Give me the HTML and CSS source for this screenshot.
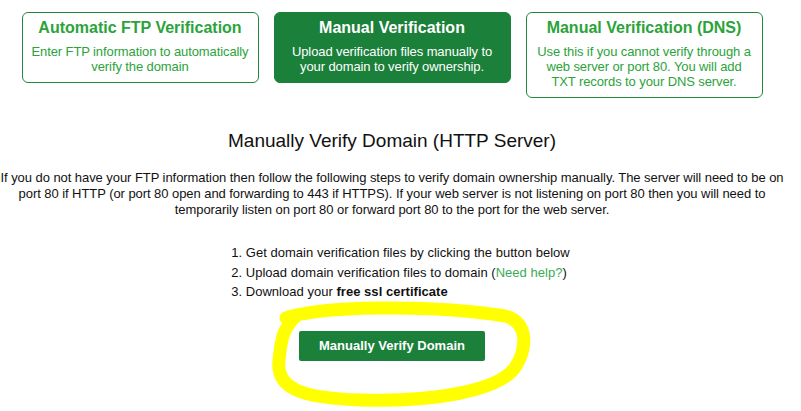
FILE: index.html
```html
<!DOCTYPE html>
<html>
<head>
<meta charset="utf-8">
<link rel="stylesheet" href="styles.css">
</head>
<body>
<div class="content">
  <div class="options">
    <div class="opt">
      <div class="opt-title">Automatic FTP Verification</div>
      <div class="opt-sub">Enter FTP information to automatically verify the domain</div>
    </div>
    <div class="opt active">
      <div class="opt-title">Manual Verification</div>
      <div class="opt-sub">Upload verification files manually to your domain to verify ownership.</div>
    </div>
    <div class="opt">
      <div class="opt-title">Manual Verification (DNS)</div>
      <div class="opt-sub">Use this if you cannot verify through a web server or port 80. You will add TXT records to your DNS server.</div>
    </div>
  </div>
  <h2 class="heading">Manually Verify Domain (HTTP Server)</h2>
  <p class="intro">If you do not have your FTP information then follow the following steps to verify domain ownership manually. The server will need to be on port 80 if HTTP (or port 80 open and forwarding to 443 if HTTPS). If your web server is not listening on port 80 then you will need to temporarily listen on port 80 or forward port 80 to the port for the web server.</p>
  <div class="steps-wrap">
    <ol class="steps">
      <li>Get domain verification files by clicking the button below</li>
      <li>Upload domain verification files to domain (<a class="help" href="#">Need help?</a>)</li>
      <li>Download your <b>free ssl certificate</b></li>
    </ol>
  </div>
  <div class="btn-wrap">
    <button class="btn">Manually Verify Domain</button>
  </div>
</div>
<svg class="scribble" width="801" height="411" viewBox="0 0 801 411">
  <path d="M286 318 C 320 306, 430 304, 505 316 C 530 322, 526 350, 516 366 C 500 392, 430 402, 360 400 C 300 398, 276 388, 279 360 C 281 340, 283 328, 296 316" fill="none" stroke="#ffff00" stroke-width="13" stroke-linecap="round" stroke-linejoin="round"/>
</svg>
</body>
</html>
```
FILE: styles.css
```css
html, body {
  margin: 0;
  padding: 0;
  background: #ffffff;
}
body {
  font-family: "Liberation Sans", Arial, sans-serif;
  color: #111111;
  width: 801px;
  height: 411px;
  overflow: hidden;
  position: relative;
}
.content {
  width: 784px;
}
.options {
  display: flex;
  justify-content: center;
  align-items: flex-start;
  gap: 15px;
  padding-top: 12px;
}
.opt {
  box-sizing: border-box;
  width: 237px;
  border: 1px solid #1e8a3c;
  border-radius: 6px;
  padding: 6px 8px 8px;
  text-align: center;
  color: #2ba33a;
  background: #fff;
}
.opt.active {
  background: #1b803a;
  border-color: #1b803a;
  color: #ffffff;
}
.opt-title {
  font-size: 16px;
  font-weight: bold;
  line-height: 18px;
  margin-bottom: 7px;
}
.opt-sub {
  font-size: 13px;
  line-height: 15px;
  letter-spacing: -0.1px;
}
.heading {
  font-size: 19px;
  font-weight: normal;
  text-align: center;
  margin: 31px 0 0;
  line-height: 24px;
  color: #111;
}
.intro {
  font-size: 13px;
  line-height: 16px;
  letter-spacing: -0.06px;
  text-align: center;
  margin: 17px 0 0;
}
.steps-wrap {
  text-align: center;
  margin-top: 25px;
}
.steps {
  display: inline-block;
  text-align: left;
  margin: 0 0 0 17px;
  padding: 0;
  list-style-position: inside;
  font-size: 13px;
  line-height: 19.5px;
  letter-spacing: 0.03px;
}
.help {
  color: #3aaa55;
  text-decoration: none;
}
.btn-wrap {
  display: flex;
  justify-content: center;
  margin-top: 29px;
}
.btn {
  width: 186px;
  height: 30px;
  border: none;
  border-radius: 2px;
  background: #1b803a;
  color: #fff;
  font-family: "Liberation Sans", Arial, sans-serif;
  font-size: 13px;
  font-weight: bold;
  padding: 0;
}
.scribble {
  position: absolute;
  left: 0;
  top: 0;
  pointer-events: none;
}
```
